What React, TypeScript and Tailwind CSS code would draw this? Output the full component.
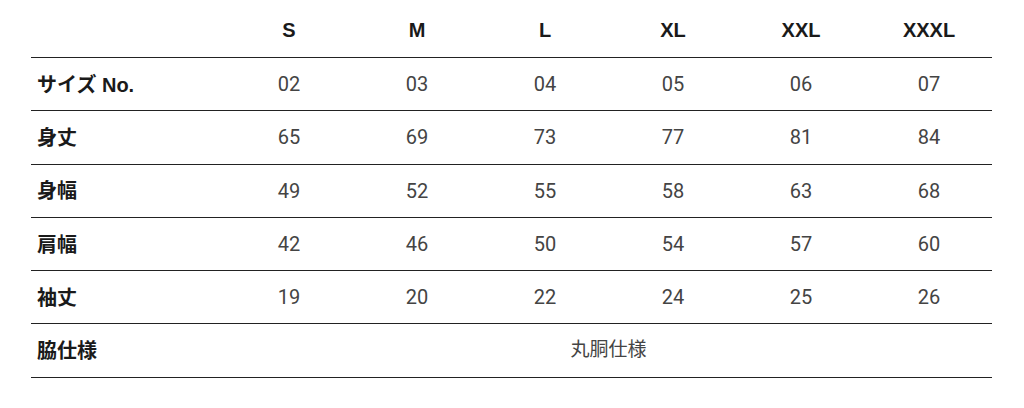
import React from 'react';

const sizes = ['S', 'M', 'L', 'XL', 'XXL', 'XXXL'];

const rows: { label: string; values: string[] }[] = [
    { label: 'サイズ No.', values: ['02', '03', '04', '05', '06', '07'] },
    { label: '身丈', values: ['65', '69', '73', '77', '81', '84'] },
    { label: '身幅', values: ['49', '52', '55', '58', '63', '68'] },
    { label: '肩幅', values: ['42', '46', '50', '54', '57', '60'] },
    { label: '袖丈', values: ['19', '20', '22', '24', '25', '26'] },
];

const cjk = { fontFamily: '"Liberation Sans", "Noto Sans CJK JP", sans-serif' };
const num = { fontFamily: 'Roboto, "Noto Sans CJK JP", sans-serif' };

const App: React.FC = () => {
    return (
        <div className="w-[1024px] h-[408px] bg-white" style={cjk}>
            <div className="ml-[31px] w-[961px]">
                <div className="grid grid-cols-[194px_repeat(6,128px)] h-[58px] items-center border-b-[1.5px] border-[#222]">
                    <div />
                    {sizes.map((s) => (
                        <div key={s} className="text-center text-[20px] font-bold text-[#1a1a1a] pt-[3px]">
                            {s}
                        </div>
                    ))}
                </div>
                {rows.map((r) => (
                    <div key={r.label} className="grid grid-cols-[194px_repeat(6,128px)] h-[53.3px] items-center border-b-[1.5px] border-[#222]">
                        <div className="pl-[6px] pt-[1px] text-[20px] font-bold text-[#1a1a1a]">{r.label}</div>
                        {r.values.map((v, i) => (
                            <div key={i} className="text-center text-[20px] text-[#444]" style={num}>
                                {v}
                            </div>
                        ))}
                    </div>
                ))}
                <div className="grid grid-cols-[194px_1fr] h-[53.3px] items-center border-b-[1.5px] border-[#222]">
                    <div className="pl-[6px] pt-[1px] text-[20px] font-bold text-[#1a1a1a]">脇仕様</div>
                    <div className="text-center text-[19px] text-[#444]">丸胴仕様</div>
                </div>
            </div>
        </div>
    );
};

export default App;
